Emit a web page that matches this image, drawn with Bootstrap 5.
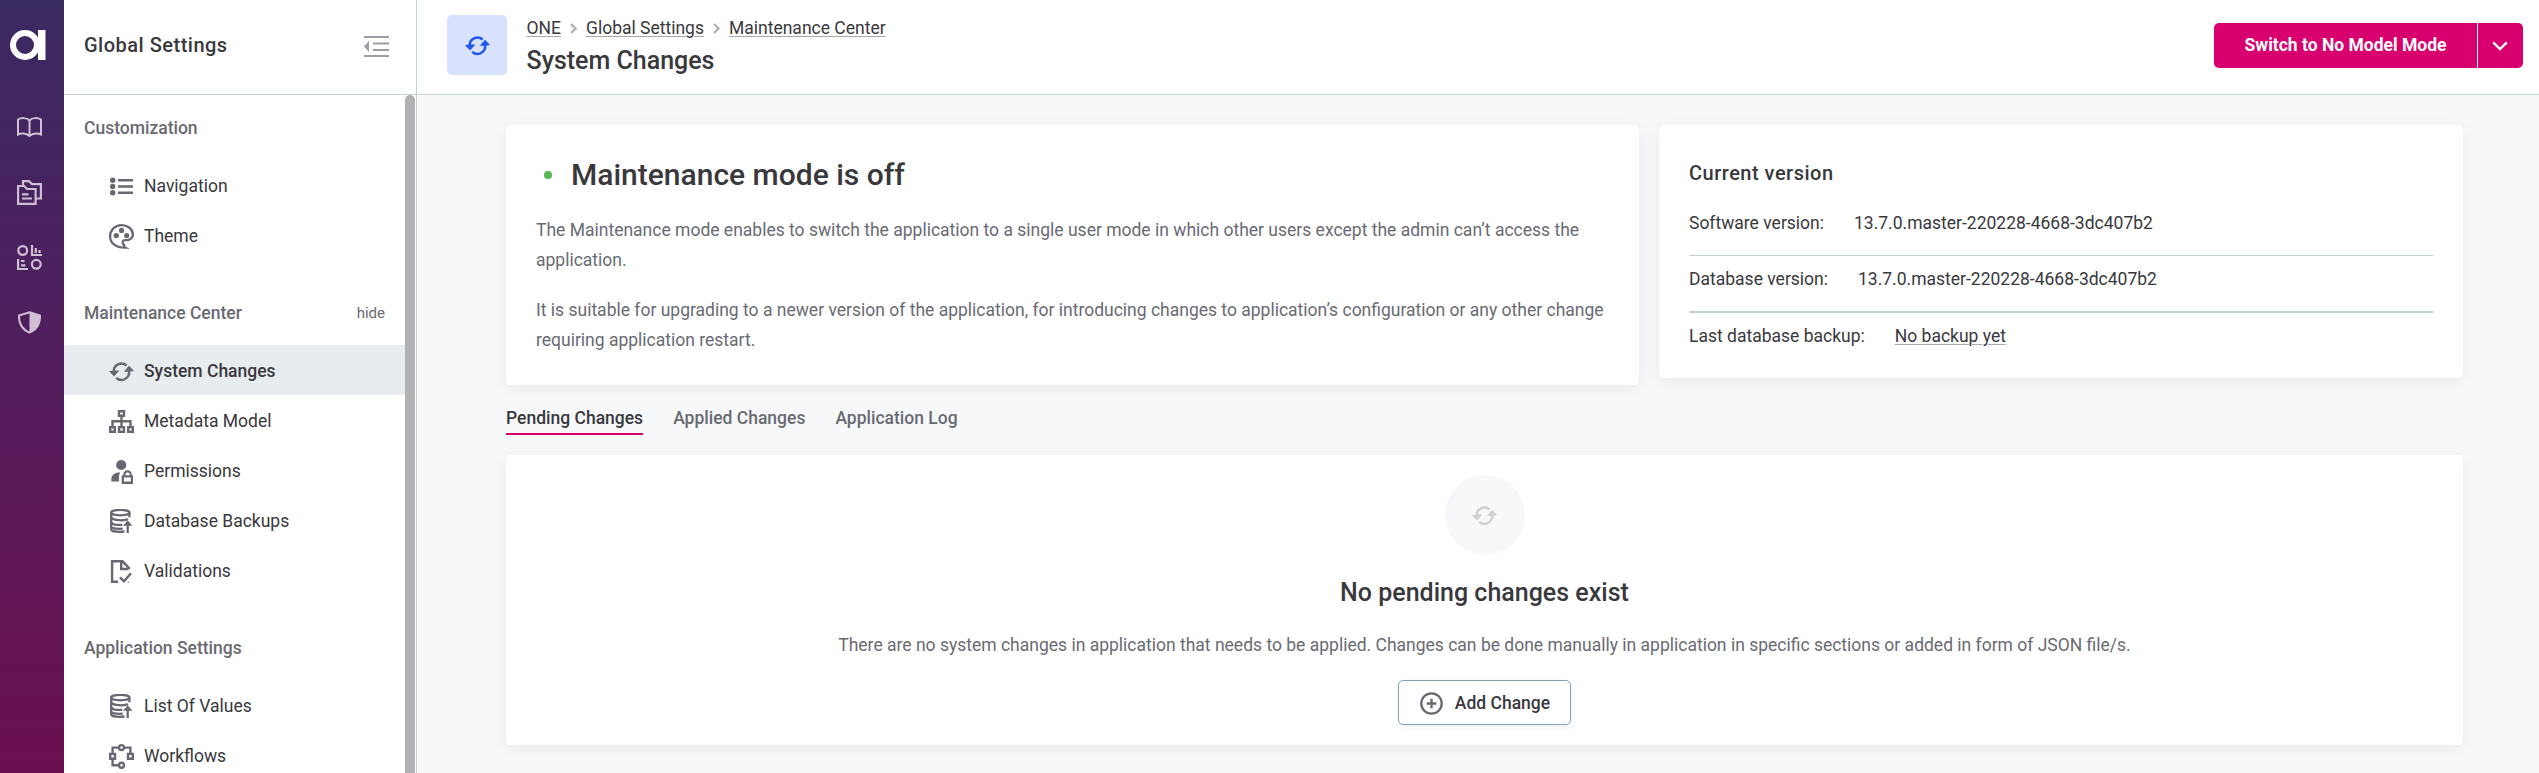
<!DOCTYPE html>
<html lang="en">
<head>
<meta charset="utf-8">
<title>System Changes</title>
<link href="https://cdn.jsdelivr.net/npm/bootstrap@5.3.0/dist/css/bootstrap.min.css" rel="stylesheet">
<style>
body{font-family:Roboto,"Liberation Sans",sans-serif;font-size:17.5px;line-height:30px;color:#39383d;background:#f6f8fa;overflow:hidden}
h1,h2,h3,p{margin:0;font-weight:500}
p{font-weight:400}
svg{display:block;flex:none;overflow:visible}
a{color:inherit}
.shell{height:773px;overflow:hidden}
.rail{width:64px;background:linear-gradient(#3a2a62,#511d5d 45%,#6c0f50);color:#cfbfd3}
.rail svg{margin-left:17px}
.rail .logo{margin:30px 0 0 10px}
.rail .book{margin-top:57px}
.rail .folders{margin-top:42px}
.rail .binary{margin-top:40px}
.rail .shield{margin:41px 0 0 18px}
.side{width:353px;border-right:1px solid #c7d3da;background:#fff}
.side-head{height:95px;border-bottom:1px solid #c7d3da;padding:0 27px 4px 20px}
.spaced{font-size:20px;line-height:30px;letter-spacing:.5px}
.side-body{width:341px}
.thumb{width:10px;height:700px;background:#b1b0b5;border-radius:5px 5px 0 0;margin-right:1px}
.group-title{height:85px;padding:38px 20px 0;line-height:30px;font-weight:500;color:#6a6a73}
.group-title.first{height:65px;padding-top:18px}
.group-title small{font-size:15px;font-weight:400}
.item{height:50px;padding:2px 0 0 45px;gap:10px;color:#39383d;text-decoration:none}
.item svg{color:#696872}
.item.active{background:#e7ecef;font-weight:500}
.top{height:95px;border-bottom:1px solid #c7d3da;background:#fff;padding:15px 16px 0 30px}
.tile{width:60px;height:60px;border-radius:5px;background:#d8e2ff;color:#1f57f5}
.heading{padding-left:19.5px}
.crumbs{gap:9px;margin-top:1px}
.crumbs a,.backup{text-decoration:underline;text-decoration-color:#a9a9ad;text-decoration-thickness:1px;text-underline-offset:1.5px}
.crumbs a{line-height:24px}
.title-lg{font-size:25px;line-height:30px}
.heading .title-lg{padding-top:6px}
.actions{padding-top:8px}
.main-btn{background:#d8006e;border:0;border-radius:5px;height:45px;font-size:17.5px;font-weight:700;color:#fff;padding:0}
.main-btn:hover{background:#d8006e;color:#fff}
.main-btn.wide{width:263px}
.main-btn.more{width:45px;margin-left:1px;padding-right:2px}
.content{padding:30px 76px 0 89px}
.cards{gap:20px}
.panel{background:#fff;border-radius:5px;box-shadow:0 4px 15px rgba(50,50,60,.07)}
.status{height:260px;width:1133px;padding:30px;color:#6a6a73}
.status h2{font-size:30px;line-height:40px;color:#39383d}
.status p{padding-top:20px}
.dot{width:8px;height:8px;border-radius:50%;background:#57b757;margin:0 19px 0 8px}
.version{height:253px;padding:33px 30px 0}
.vrow{gap:30px;padding-top:20px;height:67px}
.vrow.rule-1{border-top:1px solid #c7d3da;padding-top:8px;height:56px}
.vrow.rule-2{border-top:2px solid #c7d3da;padding-top:8px;height:57px}
.tabs{gap:30px;padding-top:18px;height:70px;color:#6a6a73;font-weight:500}
.tabs a{height:32px;line-height:30px;text-decoration:none}
.tabs a.active{color:#39383d;border-bottom:2px solid #d8006e}
.pending{height:290px;padding-top:20px;color:#6a6a73}
.pending .title-lg{color:#39383d;padding-top:23px}
.pending p{padding:22px 0 20px}
.round{width:80px;height:80px;background:#f6f8fa;color:#cfd0d3}
.add{height:45px;width:173px;border:1px solid #81a3b7;border-radius:5px;background:#fff;color:#39383d;font-size:17.5px;font-weight:500;padding:1px 0 0 1px;gap:12px;box-shadow:0 2px 6px rgba(60,100,120,.1)}
</style>
</head>
<body>
<svg width="0" height="0" class="position-absolute" aria-hidden="true">
<defs>
<symbol id="sync" viewBox="0 0 25 25"><g fill="none" stroke="currentColor" stroke-width="2.5"><path d="M17.600 6.500A7.700 7.700 0 0 0 4.800 13"/><path d="M20 12A7.700 7.700 0 0 1 7.200 18.900"/></g><path fill="currentColor" d="M0 12.200l4-.7h6.300l-5.200 6zM14.700 12.700H21l4-.7-5-5.300z"/></symbol>
<symbol id="db" viewBox="0 0 25 25"><g fill="none" stroke="currentColor" stroke-width="2.300"><ellipse cx="11.300" cy="3.600" rx="9.200" ry="2.700"/><path d="M2.200 3.700v16.500c0 1.700 4.400 2.700 8.500 2.700 1.800 0 3.300-.1 4.800-.5M20.400 3.700v4.600M2.500 8.500c1.200 3 13.500 3.800 16.300 1.400M2.500 13.600c1.200 1.900 6.500 2.600 10.800 2.200M2.500 18c1.200 1.300 6.500 2 11.300 1.700M18.700 24v-9"/></g><path fill="currentColor" d="M13.900 16.700l4.800-5.400 4.700 5.400z"/></symbol>
<symbol id="next" viewBox="0 0 7 11"><path d="M1 1l4.500 4.500L1 10" fill="none" stroke="#b1b0b5" stroke-width="2.400"/></symbol>
</defs>
</svg>
<div class="shell d-flex">
<nav class="rail flex-shrink-0">
<svg class="logo" width="36" height="30" viewBox="0 0 36 30"><circle cx="15" cy="15" r="12" fill="none" stroke="#fff" stroke-width="6"/><path fill="#fff" d="M28 0h7.500v30H28z"/></svg>
<svg class="book" width="25" height="21" viewBox="0 0 25 21" fill="none" stroke="currentColor" stroke-width="2"><path d="M12.500 3.500v15M12.500 3.500C10 .5 4 .5 1 2.500v15c3-1.500 8-1.500 11.500 1.500 3.500-3 8.500-3 11.500-1.500v-15c-3-2-9-2-11.500 1z"/></svg>
<svg class="folders" width="25" height="25" viewBox="0 0 25 25" fill="none" stroke="currentColor" stroke-width="2.200"><path d="M1.100 6h6l3 3h8.500v14.900H1.100zM6 6V1.100h6l3 3h8.900V18.500h-5.300M5 14.300h6.500M5 18.500h10"/></svg>
<svg class="binary" width="25" height="25" viewBox="0 0 25 25" fill="none" stroke="currentColor" stroke-width="2.200"><circle cx="5.700" cy="5.500" r="4.400"/><circle cx="19.300" cy="19.300" r="4.400"/><path d="M15 0v10h10M18.800 3v5M22.500 5v3M1.100 14v10H11M4 16h3.500M4 20.300h4.500"/></svg>
<svg class="shield" width="23" height="23" viewBox="0 0 23 23"><path fill="none" stroke="currentColor" stroke-width="2" d="M11.500 1.200L22 4.500C22.500 12 18.500 19 11.500 21.500 4.500 19 .5 12 1 4.500z"/><path fill="currentColor" d="M11.500 1L22 4.500C22.500 12 18.500 19 11.500 21.500z"/></svg>
</nav>
<aside class="side flex-shrink-0">
<header class="side-head d-flex align-items-center justify-content-between">
<h2 class="spaced">Global Settings</h2>
<svg class="mt-1" width="25" height="22" viewBox="0 0 25 22"><path stroke="#9d9ba7" stroke-width="2" d="M0 1h25M9 7.500h16M9 14h16M0 20h25"/><path fill="#9d9ba7" d="M0 10.500L5 5v11z"/></svg>
</header>
<div class="d-flex justify-content-between">
<div class="side-body">
<div class="group-title first">Customization</div>
<a class="item d-flex align-items-center"><svg width="25" height="25" viewBox="0 0 25 25" fill="currentColor"><circle cx="3.700" cy="6.200" r="2.700"/><circle cx="3.700" cy="12.500" r="2.700"/><circle cx="3.700" cy="18.800" r="2.700"/><path d="M9 5h15v2.400H9zM9 11.300h15v2.400H9zM9 17.600h15V20H9z"/></svg>Navigation</a>
<a class="item d-flex align-items-center"><svg width="25" height="25" viewBox="0 0 25 25"><path fill="none" stroke="currentColor" stroke-width="2.300" d="M12.500 1.100C6 1.100 1.100 6 1.100 12.500S7 24 16.500 23.700c-1.500-.8-1.800-1.500-1.300-2.500-1.700-1.200-2.200-3.700-.7-4.700 1.500-.9 3.700.1 5.500-.8 2-.9 3.900-2.800 3.900-5.200C23.900 5 18.500 1.100 12.500 1.100z"/><g fill="currentColor"><circle cx="12.500" cy="6.400" r="2.600"/><circle cx="7.300" cy="11.500" r="2.600"/><circle cx="17.700" cy="11.500" r="2.600"/></g></svg>Theme</a>
<div class="group-title d-flex justify-content-between">Maintenance Center<small>hide</small></div>
<a class="item active d-flex align-items-center"><svg width="25" height="25"><use href="#sync"/></svg>System Changes</a>
<a class="item d-flex align-items-center"><svg width="25" height="25" viewBox="0 0 25 25" fill="none" stroke="currentColor" stroke-width="2.400"><path d="M10 2.200h5v4.600h-5zM1.200 18.200h4.600v4.600H1.200zM10 18.200h5v4.600h-5zM19.200 18.200h4.600v4.600h-4.600zM12.500 7v11M3.500 18v-5.800h18V18"/></svg>Metadata Model</a>
<a class="item d-flex align-items-center"><svg width="25" height="25" viewBox="0 0 25 25"><g fill="currentColor"><circle cx="12.200" cy="6" r="5.100"/><path d="M2.300 22.600v-2.500c0-4 4-6.800 9-6.800-1.500 2-1.500 5-1.300 9.300z"/><path fill-rule="evenodd" d="M12.700 16.200h1.600v-1c0-2 1.700-3.900 4.200-3.900s4.200 1.900 4.200 3.900v1H24v8.700H12.700zM16.500 16.200h4.200v-1c0-1-.9-1.800-2.100-1.800s-2.100.8-2.100 1.800zM15 18.500v4h6.800v-4z"/></g></svg>Permissions</a>
<a class="item d-flex align-items-center"><svg width="25" height="25"><use href="#db"/></svg>Database Backups</a>
<a class="item d-flex align-items-center"><svg width="25" height="25" viewBox="0 0 25 25" fill="none" stroke="currentColor" stroke-width="2.400"><path d="M20 10.500V9l-6.500-6.700H3.100v20.500h6M12.200 2.300V10H19M11 18.300l4 4 7-8"/><path stroke-width="1" d="M18.500 23.200h1.500"/></svg>Validations</a>
<div class="group-title">Application Settings</div>
<a class="item d-flex align-items-center"><svg width="25" height="25"><use href="#db"/></svg>List Of Values</a>
<a class="item d-flex align-items-center"><svg width="25" height="25" viewBox="0 0 25 25" fill="none" stroke="currentColor" stroke-width="2.400"><circle cx="12.500" cy="3.600" r="2.500"/><circle cx="12.500" cy="21.300" r="2.500"/><path d="M1.200 9.900h4.800v4.900H1.200zM19 9.900h4.800v4.900H19zM3.600 9.900V3.600H10M15 3.600h6.400v6.300M3.600 14.900v6.400H10"/></svg>Workflows</a>
</div>
<div class="thumb flex-shrink-0"></div>
</div>
</aside>
<div class="flex-grow-1">
<header class="top d-flex">
<div class="tile d-flex align-items-center justify-content-center flex-shrink-0"><svg width="25" height="25"><use href="#sync"/></svg></div>
<div class="heading flex-grow-1">
<div class="crumbs d-flex align-items-center"><a href="#">ONE</a><svg width="7" height="11"><use href="#next"/></svg><a href="#">Global Settings</a><svg width="7" height="11"><use href="#next"/></svg><a href="#">Maintenance Center</a></div>
<h1 class="title-lg">System Changes</h1>
</div>
<div class="actions d-flex">
<button class="btn main-btn wide rounded-end-0">Switch to No Model Mode</button>
<button class="btn main-btn more rounded-start-0 d-flex align-items-center justify-content-center"><svg width="16" height="10" viewBox="0 0 16 10"><path d="M1.200 1.300L8 8l6.800-6.700" fill="none" stroke="#fff" stroke-width="2.400"/></svg></button>
</div>
</header>
<main class="content">
<div class="cards d-flex align-items-start">
<section class="panel status flex-shrink-0">
<div class="d-flex align-items-center"><span class="dot"></span><h2>Maintenance mode is off</h2></div>
<p>The Maintenance mode enables to switch the application to a single user mode in which other users except the admin can’t access the application.</p>
<p>It is suitable for upgrading to a newer version of the application, for introducing changes to application’s configuration or any other change requiring application restart.</p>
</section>
<section class="panel version flex-grow-1">
<h3 class="spaced">Current version</h3>
<div class="vrow d-flex"><span>Software version:</span><span>13.7.0.master-220228-4668-3dc407b2</span></div>
<div class="vrow rule-1 d-flex"><span>Database version:</span><span>13.7.0.master-220228-4668-3dc407b2</span></div>
<div class="vrow rule-2 d-flex"><span>Last database backup:</span><a class="backup" href="#">No backup yet</a></div>
</section>
</div>
<nav class="tabs d-flex"><a class="active">Pending Changes</a><a>Applied Changes</a><a>Application Log</a></nav>
<section class="panel pending d-flex flex-column align-items-center">
<div class="round rounded-circle d-flex align-items-center justify-content-center"><svg width="25" height="25"><use href="#sync"/></svg></div>
<h2 class="title-lg">No pending changes exist</h2>
<p>There are no system changes in application that needs to be applied. Changes can be done manually in application in specific sections or added in form of JSON file/s.</p>
<button class="btn add d-flex align-items-center justify-content-center"><svg width="23" height="23" viewBox="0 0 23 23" fill="none" stroke="#696872" stroke-width="2.300"><circle cx="11.500" cy="11.500" r="10.200"/><path d="M11.500 6.700v9.600M6.700 11.500h9.600"/></svg>Add Change</button>
</section>
</main>
</div>
</div>
<script src="https://cdn.jsdelivr.net/npm/bootstrap@5.3.0/dist/js/bootstrap.bundle.min.js"></script>
</body>
</html>
